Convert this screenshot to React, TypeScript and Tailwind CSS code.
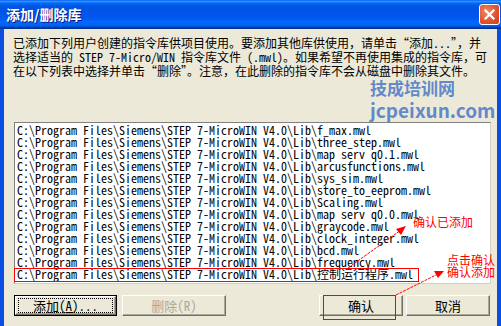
const LIB_FILES = [
  "f_max.mwl",
  "three_step.mwl",
  "map serv q0.1.mwl",
  "arcusfunctions.mwl",
  "sys_sim.mwl",
  "store_to_eeprom.mwl",
  "Scaling.mwl",
  "map serv q0.0.mwl",
  "graycode.mwl",
  "clock_integer.mwl",
  "bcd.mwl",
  "frequency.mwl",
  "控制运行程序.mwl",
];

const LIB_DIR = "C:\\Program Files\\Siemens\\STEP 7-MicroWIN V4.0\\Lib\\";

/** 经典 Windows 按钮：左上亮边、右下暗边 */
function ClassicButton({
  children,
  className = "",
  disabled = false,
  isDefault = false,
}: {
  children: React.ReactNode;
  className?: string;
  disabled?: boolean;
  isDefault?: boolean;
}) {
  return (
    <div
      className={`h-[21px] shrink-0 text-[13px] leading-none ${
        disabled ? "text-[#aca899]" : "text-black"
      } ${isDefault ? "border border-black" : ""} ${className}`}
    >
      <div className="flex h-full w-full items-center justify-center border border-t-white border-l-white border-r-[#716f64] border-b-[#716f64] bg-[#ece9d8] shadow-[inset_-1px_-1px_0_#aca899]">
        {children}
      </div>
    </div>
  );
}

export default function App() {
  return (
    <div className="relative h-[326px] w-[501px] overflow-hidden bg-[#0a4ee4] font-['Noto_Sans_Mono_CJK_SC','Noto_Sans_CJK_SC',monospace]">
      {/* 标题栏 */}
      <div className="flex h-[29px] items-center justify-between bg-[linear-gradient(to_bottom,#0058ee_0%,#3593ff_4%,#288eff_6%,#127dff_8%,#036ffc_10%,#0262ee_14%,#0057e5_20%,#0054e3_24%,#0055eb_56%,#005bf5_66%,#026afe_76%,#0062ef_86%,#0052d6_92%,#0040ab_94%,#003092_100%)] pr-[1px] pl-[6px]">
        <span className="font-['Noto_Sans_CJK_SC',sans-serif] text-[14px] font-bold text-white [text-shadow:1px_1px_0_#0a1883]">
          添加/删除库
        </span>
        <div className="flex h-[21px] w-[21px] items-center justify-center rounded-[3px] border border-white bg-[radial-gradient(circle_at_35%_35%,#f08a64,#e0502a_60%,#c8401c)]">
          <svg width="11" height="11" viewBox="0 0 11 11">
            <path d="M1.5 1.5 L9.5 9.5 M9.5 1.5 L1.5 9.5" stroke="white" strokeWidth="2.2" strokeLinecap="square" />
          </svg>
        </div>
      </div>

      {/* 主体 */}
      <div className="mx-[4px] h-[297px] bg-[#ece9d8] pt-[7px] pl-[9px]">
        <p className="whitespace-nowrap text-[12px] leading-[14px] text-black">
          已添加下列用户创建的指令库供项目使用。要添加其他库供使用，请单击“添加...”，并
          <br />
          选择适当的 STEP 7-Micro/WIN 指令库文件 (.mwl)。如果希望不再使用集成的指令库，可
          <br />
          在以下列表中选择并单击“删除”。注意，在此删除的指令库不会从磁盘中删除其文件。
        </p>

        <div className="mt-[44px] ml-[1px] h-[162px] w-[477px] border border-t-[#808080] border-l-[#808080] border-r-[#d4d0c8] border-b-[#d4d0c8] bg-white pt-[1px] pl-[2px]">
          {LIB_FILES.map((name) => (
            <div key={name} className="h-[12px] whitespace-nowrap text-[12px] leading-[12px] text-black">
              {LIB_DIR + name}
            </div>
          ))}
        </div>

        <div className="mt-[11px] ml-[1px] flex">
          <ClassicButton isDefault className="w-[103px]">
            <span className="flex h-[15px] w-[95px] items-center justify-center border border-dotted border-black">
              添加(<span className="underline">A</span>)...
            </span>
          </ClassicButton>
          <ClassicButton disabled className="ml-[5px] w-[104px]">
            删除(R)
          </ClassicButton>
          <ClassicButton className="ml-[93px] w-[84px]">确认</ClassicButton>
          <ClassicButton className="ml-[3px] w-[84px]">取消</ClassicButton>
        </div>
      </div>

      {/* 水印 */}
      <div className="pointer-events-none absolute top-[77px] left-[370px] font-['Noto_Sans_CJK_SC',sans-serif] font-bold text-[#4f7cc8]/90">
        <div className="text-[17px] leading-[22px]">技成培训网</div>
        <div className="text-[19px] leading-[21px]">jcpeixun.com</div>
      </div>

      {/* 红色标注 */}
      <div className="pointer-events-none absolute top-[268px] left-[14px] h-[14px] w-[405px] border border-[#ff0000]" />
      <div className="pointer-events-none absolute top-[295px] left-[323px] h-[25px] w-[73px] border border-[#ff0000]" />
      <span className="absolute top-[215px] left-[413px] font-['Noto_Sans_CJK_SC',sans-serif] text-[12px] leading-[14px] text-[#ff0000]">
        确认已添加
      </span>
      <span className="absolute top-[254px] left-[447px] font-['Noto_Sans_CJK_SC',sans-serif] text-[12px] leading-[12px] text-[#ff0000]">
        点击确认
      </span>
      <span className="absolute top-[266px] left-[447px] font-['Noto_Sans_CJK_SC',sans-serif] text-[12px] leading-[12px] text-[#ff0000]">
        确认添加
      </span>
      <svg className="pointer-events-none absolute inset-0" width="501" height="326">
        <path d="M348 268 L401 230" stroke="#ff0000" strokeWidth="1" strokeDasharray="3 1" fill="none" />
        <path d="M406 226 L396 229 L401 235 Z" fill="#ff0000" />
        <path d="M396 295 L438 274" stroke="#ff0000" strokeWidth="1" strokeDasharray="3 1" fill="none" />
        <path d="M444 271 L434 271 L438 278 Z" fill="#ff0000" />
      </svg>
    </div>
  );
}
